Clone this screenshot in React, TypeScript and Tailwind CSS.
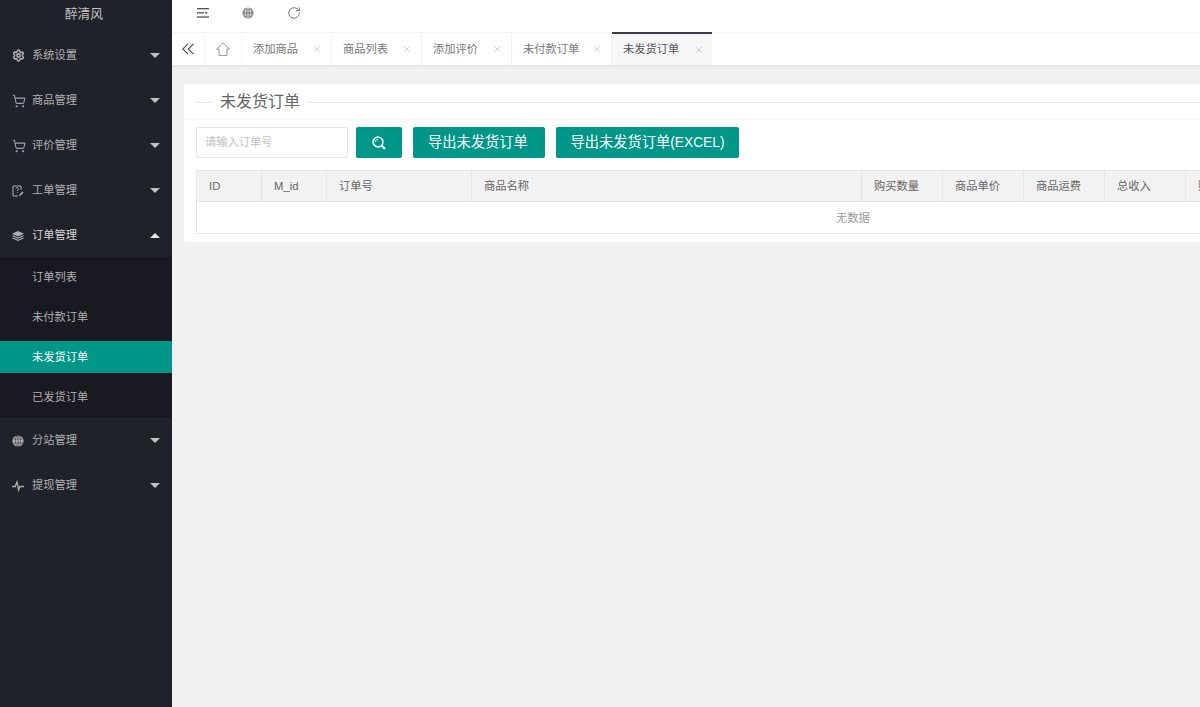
import { RotateCw, Settings, ShoppingCart, X } from "lucide-react";

const font = { fontFamily: '"Liberation Sans", "Noto Sans CJK SC", sans-serif' };

function GlobeFill({ className, grid }: { className?: string; grid: string }) {
  return (
    <svg viewBox="0 0 12 12" className={className}>
      <circle cx="6" cy="6" r="5.6" fill="currentColor" />
      <g fill="none" stroke={grid} strokeOpacity="0.7" strokeWidth="0.7">
        <ellipse cx="6" cy="6" rx="2.6" ry="5.2" />
        <path d="M6 .6v10.8M.8 4h10.4M.8 8h10.4" />
      </g>
    </svg>
  );
}

function Stack({ className }: { className?: string }) {
  return (
    <svg viewBox="0 0 12 12" className={className} fill="currentColor">
      <path d="M6 1 12 3.8 6 6.6 0 3.8Z" />
      <path d="M1 5.2 6 7.5l5-2.3L12 6 6 8.8 0 6Z" />
      <path d="M1 7.4 6 9.7l5-2.3 1 .8L6 11 0 8.2Z" />
    </svg>
  );
}

function Ticket({ className }: { className?: string }) {
  return (
    <svg viewBox="0 0 12 12" className={className} fill="none" stroke="currentColor" strokeWidth="1">
      <path d="M9 5V1H1v10h5" />
      <path d="M4 3.8c0-1.6 2.6-1.6 2.6 0 0 1-1.3 1-1.3 2.2M5.3 7.2v.8" strokeWidth="0.9" />
      <path d="m7 11 .4-1.6 3-3 1.2 1.2-3 3Z" fill="currentColor" stroke="none" />
    </svg>
  );
}

function Pulse({ className }: { className?: string }) {
  return (
    <svg viewBox="0 0 12 12" className={className} fill="none" stroke="currentColor" strokeWidth="1.3">
      <path d="M0 6.5h3.2L5 2l1.6 8 1.3-3.5H12" />
    </svg>
  );
}

function Fold({ className }: { className?: string }) {
  return (
    <svg viewBox="0 0 12 10" className={className} fill="currentColor">
      <rect x="0" y="0" width="12" height="1.3" />
      <rect x="0" y="4.2" width="7" height="1.3" />
      <path d="M8.4 3.4 11 4.85 8.4 6.3Z" />
      <rect x="0" y="8.4" width="12" height="1.3" />
    </svg>
  );
}

function House({ className }: { className?: string }) {
  return (
    <svg viewBox="0 0 14 14" className={className} fill="none" stroke="currentColor" strokeWidth="0.9">
      <path d="M.6 7 7 .8 13.4 7H11v6.4H3V7Z" />
    </svg>
  );
}

function DoubleLeft({ className }: { className?: string }) {
  return (
    <svg viewBox="0 0 12 12" className={className} fill="none" stroke="currentColor" strokeWidth="1.2">
      <path d="M6 .8.9 6 6 11.2M11.4.8 6.3 6l5.1 5.2" />
    </svg>
  );
}

function Lens({ className }: { className?: string }) {
  return (
    <svg viewBox="0 0 14 14" className={className} fill="none" stroke="currentColor">
      <circle cx="6" cy="6" r="4.9" strokeWidth="1.7" />
      <path d="M3.4 6A2.6 2.6 0 0 1 6 3.4" strokeWidth="0.9" />
      <path d="m9.6 9.6 3.4 3.4" strokeWidth="2.4" />
    </svg>
  );
}

const Cart = () => <ShoppingCart className="h-[14px] w-[14px] text-[#a0a0a0]" strokeWidth={1.8} />;

function MenuRow({ icon, label, open }: { icon: React.ReactNode; label: string; open?: boolean }) {
  return (
    <div className="flex h-[45px] items-center pl-[12px] pr-[12px]">
      <span className="flex w-[20px] items-center">{icon}</span>
      <span className={open ? "text-[#d6d6d6]" : ""}>{label}</span>
      <span
        className={`ml-auto h-0 w-0 border-x-[5px] border-x-transparent ${
          open ? "border-b-[5px] border-b-[#e8e8e8]" : "border-t-[5px] border-t-[#c2c2c2]"
        }`}
      />
    </div>
  );
}

const tabs = [
  { label: "添加商品", w: "w-[90px]" },
  { label: "商品列表", w: "w-[90px]" },
  { label: "添加评价", w: "w-[90px]" },
  { label: "未付款订单", w: "w-[100px]" },
];

const columns = [
  { label: "ID", w: "w-[65px]" },
  { label: "M_id", w: "w-[65px]" },
  { label: "订单号", w: "w-[145px]" },
  { label: "商品名称", w: "w-[390px]" },
  { label: "购买数量", w: "w-[81px]" },
  { label: "商品单价", w: "w-[81px]" },
  { label: "商品运费", w: "w-[81px]" },
  { label: "总收入", w: "w-[81px]" },
  { label: "购买时间", w: "w-[120px]" },
];

export default function App() {
  return (
    <div className="flex h-[707px] w-[1200px] overflow-hidden bg-[#f1f1f1] text-[11.25px] text-[#666]" style={font}>
      <aside className="flex w-[172px] shrink-0 flex-col bg-[#20222a] text-[#b0b0b0]">
        <div className="flex h-[33px] items-center justify-center pb-[6px] pr-[4px] text-[12.75px] text-[#c4c4c4]">醉清风</div>
        <MenuRow icon={<Settings className="h-[13px] w-[13px]" strokeWidth={2.8} />} label="系统设置" />
        <MenuRow icon={<Cart />} label="商品管理" />
        <MenuRow icon={<Cart />} label="评价管理" />
        <MenuRow icon={<Ticket className="h-[12px] w-[12px]" />} label="工单管理" />
        <MenuRow icon={<Stack className="h-[12px] w-[12px]" />} label="订单管理" open />
        <div className="-mt-px bg-[#191a21] pb-px">
          <div className="flex h-[40px] items-center pl-[32px]">订单列表</div>
          <div className="flex h-[40px] items-center pl-[32px]">未付款订单</div>
          <div className="flex h-[40px] items-center py-[4px]">
            <div className="flex h-[32px] w-full items-center bg-[#009688] pl-[32px] text-white">未发货订单</div>
          </div>
          <div className="flex h-[40px] items-center pl-[32px]">已发货订单</div>
        </div>
        <MenuRow icon={<GlobeFill className="h-[12px] w-[12px]" grid="#20222a" />} label="分站管理" />
        <MenuRow icon={<Pulse className="h-[12px] w-[12px]" />} label="提现管理" />
      </aside>

      <main className="min-w-0 flex-1 overflow-hidden">
        <header className="flex h-[33px] items-center border-b border-[#f4f4f4] bg-white pb-[6px] pl-[25px] text-[#555]">
          <Fold className="h-[10px] w-[12px]" />
          <GlobeFill className="ml-[33px] h-[12px] w-[12px] text-[#808080]" grid="#ffffff" />
          <RotateCw className="ml-[33px] h-[14px] w-[14px]" strokeWidth={1.4} />
        </header>

        <nav className="flex h-[33px] border-b border-[#e4e4e4] bg-white shadow-[0_1px_2px_rgba(0,0,0,0.06)]">
          <div className="flex w-[33px] items-center justify-center border-r border-[#f2f2f2] pr-px">
            <DoubleLeft className="h-[12px] w-[12px] text-[#555]" />
          </div>
          <div className="flex w-[37px] items-center justify-center border-r border-[#f2f2f2]">
            <House className="h-[14px] w-[14px] text-[#888]" />
          </div>
          {tabs.map((tab) => (
            <div key={tab.label} className={`flex ${tab.w} items-center border-r border-[#f2f2f2] pl-[11px] text-[#777]`}>
              <span>{tab.label}</span>
              <X className="ml-auto mr-[9px] h-[10px] w-[10px] text-[#aaa]" strokeWidth={1.4} />
            </div>
          ))}
          <div className="-mt-px flex w-[100px] items-center border-t-2 border-[#393d49] bg-[#f6f6f6] pl-[11px] text-[#555]">
            <span>未发货订单</span>
            <X className="ml-auto mr-[8px] h-[10px] w-[10px] text-[#aaa]" strokeWidth={1.4} />
          </div>
        </nav>

        <section className="ml-[12px] mt-[18px] w-[1100px] rounded-[2px] bg-white pb-[8px]">
          <div className="flex h-[36px] items-center border-b border-[#f6f6f6] pl-[12px] pt-px">
            <span className="h-px w-[16px] bg-[#e6e6e6]" />
            <span className="px-[8px] text-[16px] leading-none text-[#666]">未发货订单</span>
            <span className="h-px flex-1 bg-[#e6e6e6]" />
          </div>

          <div className="mt-[7px] flex items-center pl-[12px]">
            <div className="flex h-[31px] w-[152px] items-center rounded-[2px] border border-[#e6e6e6] pl-[8px] text-[#c2c2c2]">
              请输入订单号
            </div>
            <button type="button" className="ml-[8px] flex h-[31px] w-[46px] items-center justify-center rounded-[2px] bg-[#009688] text-white">
              <Lens className="h-[14px] w-[14px] opacity-90" />
            </button>
            <button type="button" className="ml-[11px] h-[31px] w-[132px] rounded-[2px] bg-[#009688] pr-[2px] text-[14.25px] text-white">
              导出未发货订单
            </button>
            <button type="button" className="ml-[11px] h-[31px] w-[183px] rounded-[2px] bg-[#009688] text-[14.25px] text-white">
              导出未发货订单<span className="text-[13.75px]">(EXCEL)</span>
            </button>
          </div>

          <div className="ml-[12px] mt-[12px] border border-[#e6e6e6]">
            <div className="flex h-[31px] border-b border-[#e6e6e6] bg-[#f2f2f2]">
              {columns.map((col) => (
                <div key={col.label} className={`flex ${col.w} shrink-0 items-center whitespace-nowrap border-r border-[#e6e6e6] pl-[12px]`}>
                  {col.label}
                </div>
              ))}
            </div>
            <div className="flex h-[31px] items-center pl-[639px] pt-px text-[#999]">无数据</div>
          </div>
        </section>
      </main>
    </div>
  );
}
